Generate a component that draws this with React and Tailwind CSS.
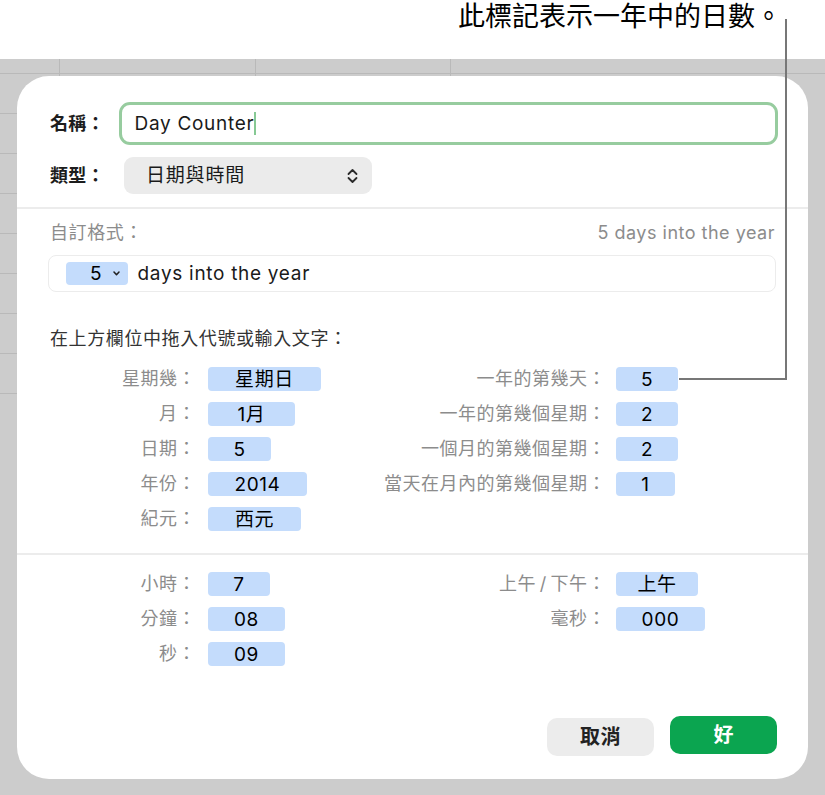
import React from 'react';

const dateLeft = [
  ['星期幾：', '星期日', 'w-[113px]'],
  ['月：', '1月', 'w-[87px]'],
  ['日期：', '5', 'w-[63px]'],
  ['年份：', '2014', 'w-[99px]'],
  ['紀元：', '西元', 'w-[93px]'],
];

const dateRight = [
  ['一年的第幾天：', '5', 'w-[62px]'],
  ['一年的第幾個星期：', '2', 'w-[62px]'],
  ['一個月的第幾個星期：', '2', 'w-[62px]'],
  ['當天在月內的第幾個星期：', '1', 'w-[59px]'],
];

const timeLeft = [
  ['小時：', '7', 'w-[62px]'],
  ['分鐘：', '08', 'w-[77px]'],
  ['秒：', '09', 'w-[77px]'],
];

const timeRight = [
  ['上午\u2009/\u2009下午：', '上午', 'w-[82px]'],
  ['毫秒：', '000', 'w-[89px]'],
];

const Token = ({ text, width }) => (
  <div className={`${width} h-[24px] rounded-[4px] bg-[#c4dcfc] flex items-center justify-center text-[19px] leading-none tracking-[0.6px] text-black`}>
    {text}
  </div>
);

const TokenGrid = ({ rows, cols }) => (
  <div className={`grid ${cols} gap-y-[11px] items-center`}>
    {rows.map(([label, value, width]) => (
      <React.Fragment key={label}>
        <div className="text-right text-[18px] leading-[24px] tracking-[0.5px] text-[#8c8c8c] whitespace-nowrap">{label}</div>
        <Token text={value} width={width} />
      </React.Fragment>
    ))}
  </div>
);

const TokenSection = ({ left, right }) => (
  <div className="flex pl-[33px] items-start">
    <div className="w-[320px]">
      <TokenGrid rows={left} cols="grid-cols-[146px_auto] gap-x-[12px]" />
    </div>
    <TokenGrid rows={right} cols="grid-cols-[236px_auto] gap-x-[10px]" />
  </div>
);

const Sheet = () => (
  <div className="w-[451px]">
    <div className="flex h-[15px] border-b border-[#b9b9b9] w-[825px]">
      <div className="w-[60px] border-r border-[#b9b9b9]" />
      <div className="w-[196px] border-r border-[#b9b9b9]" />
      <div className="w-[195px] border-r border-[#b9b9b9]" />
    </div>
    {Array.from({ length: 8 }).map((_, r) => (
      <div key={r} className="flex h-[40px] border-b border-[#b9b9b9]">
        <div className="w-[60px] border-r border-[#b9b9b9]" />
        <div className="w-[196px] border-r border-[#b9b9b9]" />
        <div className="w-[195px] border-r border-[#b9b9b9]" />
      </div>
    ))}
  </div>
);

export default function App() {
  return (
    <div className="relative w-[825px] h-[795px] overflow-hidden bg-white text-[#1f1f1f] font-['Inter','Noto_Sans_CJK_TC',sans-serif]">
      <div className="h-[59px] flex justify-end items-start pt-[3px] pr-[43px]">
        <span className="text-[27px] leading-[28px] text-black">此標記表示一年中的日數。</span>
      </div>

      <div className="relative h-[736px] bg-[#cccccc]">
        <Sheet />

        <div className="absolute left-[17px] top-[17px] w-[791px] h-[703px] rounded-[32px] bg-white flex flex-col">
          <div className="pl-[33px] pr-[30px] pt-[26px]">
            <div className="flex items-center">
              <div className="w-[69px] text-[18px] tracking-[0.3px] font-bold text-[#1d1d1d]">名稱：</div>
              <div className="flex-1 h-[43px] rounded-[11px] border-[3.5px] border-[#97cc9f] flex items-center pl-[12.5px]">
                <span className="text-[19px] leading-none tracking-[0.7px] text-[#1a1a1a]">Day Counter</span>
                <span className="w-[2px] h-[23px] bg-[#86c994]" />
              </div>
            </div>
            <div className="flex items-center mt-[12px]">
              <div className="w-[74px] text-[18px] tracking-[0.3px] font-bold text-[#1d1d1d]">類型：</div>
              <div className="w-[248px] h-[37px] rounded-[9px] bg-[#ebebeb] flex items-center justify-between pl-[22px] pr-[14px]">
                <span className="text-[19px] leading-none tracking-[0.8px] text-[#1a1a1a]">日期與時間</span>
                <svg width="11" height="16" viewBox="0 0 11 16" fill="none" stroke="#2a2a2a" strokeWidth="1.8" strokeLinecap="round" strokeLinejoin="round">
                  <path d="M1.5 6 L5.5 2 L9.5 6" />
                  <path d="M1.5 10 L5.5 14 L9.5 10" />
                </svg>
              </div>
            </div>
          </div>

          <div className="mt-[13px] h-[2px] bg-[#ececec]" />

          <div className="mt-[11px] h-[24px] flex items-center justify-between px-[33px]">
            <span className="text-[18px] tracking-[0.6px] text-[#8c8c8c]">自訂格式：</span>
            <span className="text-[18px] tracking-[0.5px] text-[#8c8c8c]">5 days into the year</span>
          </div>

          <div className="mt-[11px] ml-[31px] mr-[32px] h-[37px] rounded-[8px] border-[1.5px] border-[#ececec] flex items-center pl-[16.5px]">
            <div className="w-[62px] h-[23px] rounded-[4px] bg-[#c4dcfc] flex items-center justify-end pr-[8px] gap-[11px]">
              <span className="text-[19px] leading-none text-black">5</span>
              <svg width="7" height="5" viewBox="0 0 7 5" fill="none" stroke="#222" strokeWidth="1.5" strokeLinecap="round" strokeLinejoin="round">
                <path d="M1 1 L3.5 3.8 L6 1" />
              </svg>
            </div>
            <span className="ml-[10px] text-[19px] leading-none tracking-[0.7px] text-[#1a1a1a]">days into the year</span>
          </div>

          <div className="mt-[35px] pl-[33px] text-[18px] leading-[24px] tracking-[0.6px] text-[#333333]">在上方欄位中拖入代號或輸入文字：</div>

          <div className="mt-[16px]">
            <TokenSection left={dateLeft} right={dateRight} />
          </div>

          <div className="mt-[22px] h-[2px] bg-[#ececec]" />

          <div className="mt-[17px]">
            <TokenSection left={timeLeft} right={timeRight} />
          </div>

          <div className="flex-1" />

          <div className="flex justify-end items-start gap-[16px] pr-[31px] pb-[23px]">
            <button className="mt-[2px] w-[107px] h-[38px] rounded-[10px] bg-[#ececec] text-[20px] tracking-[0.5px] font-bold text-[#222]">取消</button>
            <button className="w-[107px] h-[38px] rounded-[10px] bg-[#0ba550] text-[20px] font-bold text-white">好</button>
          </div>
        </div>
      </div>

      <svg className="absolute left-0 top-0 pointer-events-none" width="825" height="795">
        <polyline points="786,19 786,379 679,379" fill="none" stroke="#777777" strokeWidth="2" />
      </svg>
    </div>
  );
}
